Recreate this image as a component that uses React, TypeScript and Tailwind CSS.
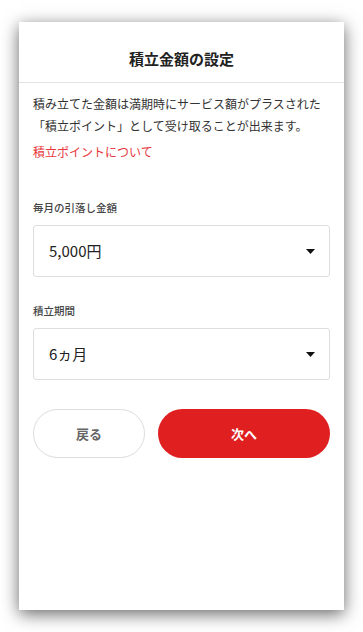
import { useState } from 'react'

const font = { fontFamily: '"Noto Sans CJK JP", "Noto Sans", sans-serif' }

function Caret() {
    return (
        <svg width="9" height="5" viewBox="0 0 9 5" className="shrink-0">
            <path d="M0 0h9L4.5 5z" fill="#111" />
        </svg>
    )
}

function SelectBox({ value }: { value: string }) {
    return (
        <div className="flex h-[52px] items-center justify-between rounded-[3px] border border-[#dedede] bg-white pl-[15px] pr-[14px]">
            <span className="text-[15px] text-[#222]">{value}</span>
            <Caret />
        </div>
    )
}

export default function App() {
    const [amount] = useState('5,000円')
    const [period] = useState('6ヵ月')

    return (
        <div className="min-h-[632px] bg-white pt-[22px] pl-[19px]" style={font}>
            <div className="flex h-[588px] w-[325px] flex-col bg-white shadow-[0_4px_16px_rgba(0,0,0,0.6)]">
                <div className="border-b border-[#e3e3e3] pt-[26px] pb-[12px] text-center text-[15px] leading-[22px] font-bold text-[#222]">
                    積立金額の設定
                </div>
                <div className="px-[14px]">
                    <p className="mt-[10px] text-[12px] leading-[22px] text-[#333]">
                        積み立てた金額は満期時にサービス額がプラスされた「積立ポイント」として受け取ることが出来ます。
                    </p>
                    <p className="mt-[4px] text-[12px] leading-[22px] text-[#e8373c]">積立ポイントについて</p>

                    <div className="mt-[37px] text-[10.5px] leading-[16px] font-medium text-[#444]">毎月の引落し金額</div>
                    <div className="mt-[9px]">
                        <SelectBox value={amount} />
                    </div>

                    <div className="mt-[26px] text-[10.5px] leading-[16px] font-medium text-[#444]">積立期間</div>
                    <div className="mt-[9px]">
                        <SelectBox value={period} />
                    </div>

                    <div className="mt-[29px] flex gap-[13px]">
                        <button className="h-[49px] w-[112px] rounded-full border border-[#dcdcdc] bg-white text-[13px] font-bold text-[#666]">
                            戻る
                        </button>
                        <button className="h-[49px] flex-1 rounded-full bg-[#e01f21] text-[13px] font-bold text-white">
                            次へ
                        </button>
                    </div>
                </div>
            </div>
        </div>
    )
}
